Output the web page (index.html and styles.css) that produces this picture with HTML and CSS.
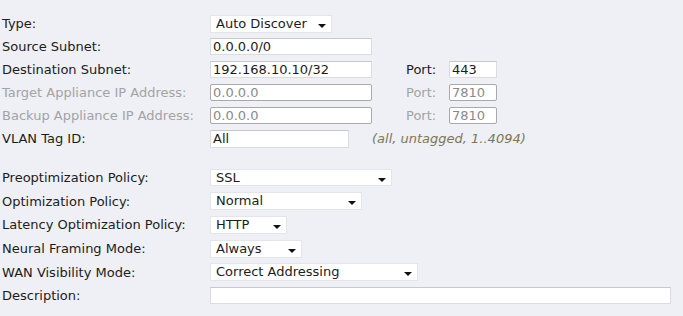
FILE: index.html
```html
<!DOCTYPE html>
<html>
<head>
<meta charset="utf-8">
<link rel="stylesheet" href="styles.css">
</head>
<body>
<form class="form">
  <div class="row">
    <span class="lbl">Type:</span>
    <span class="sel w-type"><span class="val">Auto Discover</span><span class="arrow"></span></span>
  </div>
  <div class="row">
    <span class="lbl">Source Subnet:</span>
    <span class="txt w-std">0.0.0.0/0</span>
  </div>
  <div class="row">
    <span class="lbl">Destination Subnet:</span>
    <span class="txt w-std">192.168.10.10/32</span>
    <span class="port-lbl">Port:</span>
    <span class="txt w-port">443</span>
  </div>
  <div class="row dis">
    <span class="lbl">Target Appliance IP Address:</span>
    <span class="txt w-std">0.0.0.0</span>
    <span class="port-lbl">Port:</span>
    <span class="txt w-port">7810</span>
  </div>
  <div class="row dis">
    <span class="lbl">Backup Appliance IP Address:</span>
    <span class="txt w-std">0.0.0.0</span>
    <span class="port-lbl">Port:</span>
    <span class="txt w-port">7810</span>
  </div>
  <div class="row">
    <span class="lbl">VLAN Tag ID:</span>
    <span class="txt w-vlan tall">All</span>
    <span class="hint">(all, untagged, 1..4094)</span>
  </div>

  <div class="spacer"></div>

  <div class="row row-b">
    <span class="lbl">Preoptimization Policy:</span>
    <span class="sel sel-s w-preopt"><span class="val">SSL</span><span class="arrow"></span></span>
  </div>
  <div class="row row-b">
    <span class="lbl">Optimization Policy:</span>
    <span class="sel w-opt"><span class="val">Normal</span><span class="arrow"></span></span>
  </div>
  <div class="row row-b">
    <span class="lbl">Latency Optimization Policy:</span>
    <span class="sel w-lat"><span class="val">HTTP</span><span class="arrow"></span></span>
  </div>
  <div class="row row-b">
    <span class="lbl">Neural Framing Mode:</span>
    <span class="sel w-neural"><span class="val">Always</span><span class="arrow"></span></span>
  </div>
  <div class="row row-b">
    <span class="lbl">WAN Visibility Mode:</span>
    <span class="sel w-wan"><span class="val">Correct Addressing</span><span class="arrow"></span></span>
  </div>
  <div class="row row-b">
    <span class="lbl">Description:</span>
    <span class="txt w-desc desc"></span>
  </div>
</form>
</body>
</html>
```

FILE: styles.css
```css
html, body {
  margin: 0;
  padding: 0;
  background: #eef0f5;
}

.form {
  padding: 12px 0 0 2px;
  font-family: "DejaVu Sans", Verdana, sans-serif;
  font-size: 13px;
  color: #1c1c1c;
}

.row {
  display: flex;
  align-items: center;
  height: 23px;
}

.row-b {
  height: 23.6px;
}

.spacer {
  height: 16px;
}

.lbl {
  width: 208px;
  flex: none;
  white-space: nowrap;
}

.dis .lbl,
.dis .port-lbl {
  color: #a3a3a3;
}

.txt {
  box-sizing: border-box;
  height: 17px;
  line-height: 15px;
  padding: 0 0 0 2px;
  background: #fff;
  border: 1px solid #d9dce2;
  border-top-color: #c6c9cf;
  white-space: nowrap;
  overflow: hidden;
}

.txt.tall {
  height: 18px;
  line-height: 16px;
}

.txt.desc {
  height: 17px;
}

.dis .txt {
  border-color: #a9a9a9;
  border-radius: 2px;
  color: #8a8a8a;
}

.w-std { width: 162px; }
.w-port { width: 48px; }
.w-vlan { width: 139px; }
.w-desc { width: 461px; }

.port-lbl {
  margin-left: 34px;
  width: 43px;
  flex: none;
}

.hint {
  margin-left: 23px;
  font-style: italic;
  color: #7d7658;
}

.sel {
  box-sizing: border-box;
  height: 18px;
  display: flex;
  align-items: center;
  justify-content: space-between;
  padding: 0 5px 0 5px;
  background: #fff;
  border: 1px solid #e3e5ea;
  white-space: nowrap;
}

.sel-s {
  height: 17px;
}

.val {
  line-height: 16px;
}

.arrow {
  width: 0;
  height: 0;
  margin-top: 4px;
  border-left: 4px solid transparent;
  border-right: 4px solid transparent;
  border-top: 4px solid #111;
}

.w-type { width: 122px; }
.w-preopt { width: 182px; }
.w-opt { width: 152px; }
.w-lat { width: 77px; }
.w-neural { width: 92px; }
.w-wan { width: 208px; }
```
